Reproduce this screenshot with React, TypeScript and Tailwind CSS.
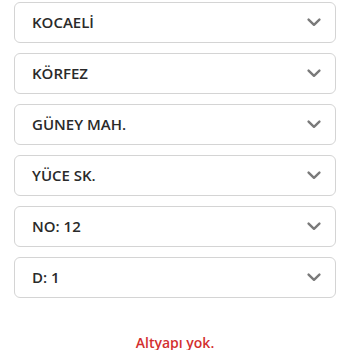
import React from "react";

const items = ["KOCAELİ", "KÖRFEZ", "GÜNEY MAH.", "YÜCE SK.", "NO: 12", "D: 1"];

function Chevron() {
  return (
    <svg width="14" height="9" viewBox="0 0 14 9" fill="none">
      <path d="M1.6 1.6 L7 6.8 L12.4 1.6" stroke="#7a7a7a" strokeWidth="2.4" strokeLinecap="round" strokeLinejoin="round" />
    </svg>
  );
}

export default function App() {
  return (
    <div className="w-[350px] h-[350px] bg-white overflow-hidden" style={{ fontFamily: '"Open Sans", sans-serif' }}>
      <div className="flex flex-col gap-[10px] px-[14px] pt-[2px]">
        {items.map((t) => (
          <div
            key={t}
            className="h-[41px] flex items-center justify-between rounded-[6px] border-[1.5px] border-[#d4d4d4] pl-[17px] pr-[14px]"
          >
            <span className="text-[15px] font-[560] text-[#2a2a2a] leading-none">{t}</span>
            <Chevron />
          </div>
        ))}
      </div>
      <div className="mt-[34px] text-center text-[14px] font-semibold text-[#d32f2f]">Altyapı yok.</div>
    </div>
  );
}
